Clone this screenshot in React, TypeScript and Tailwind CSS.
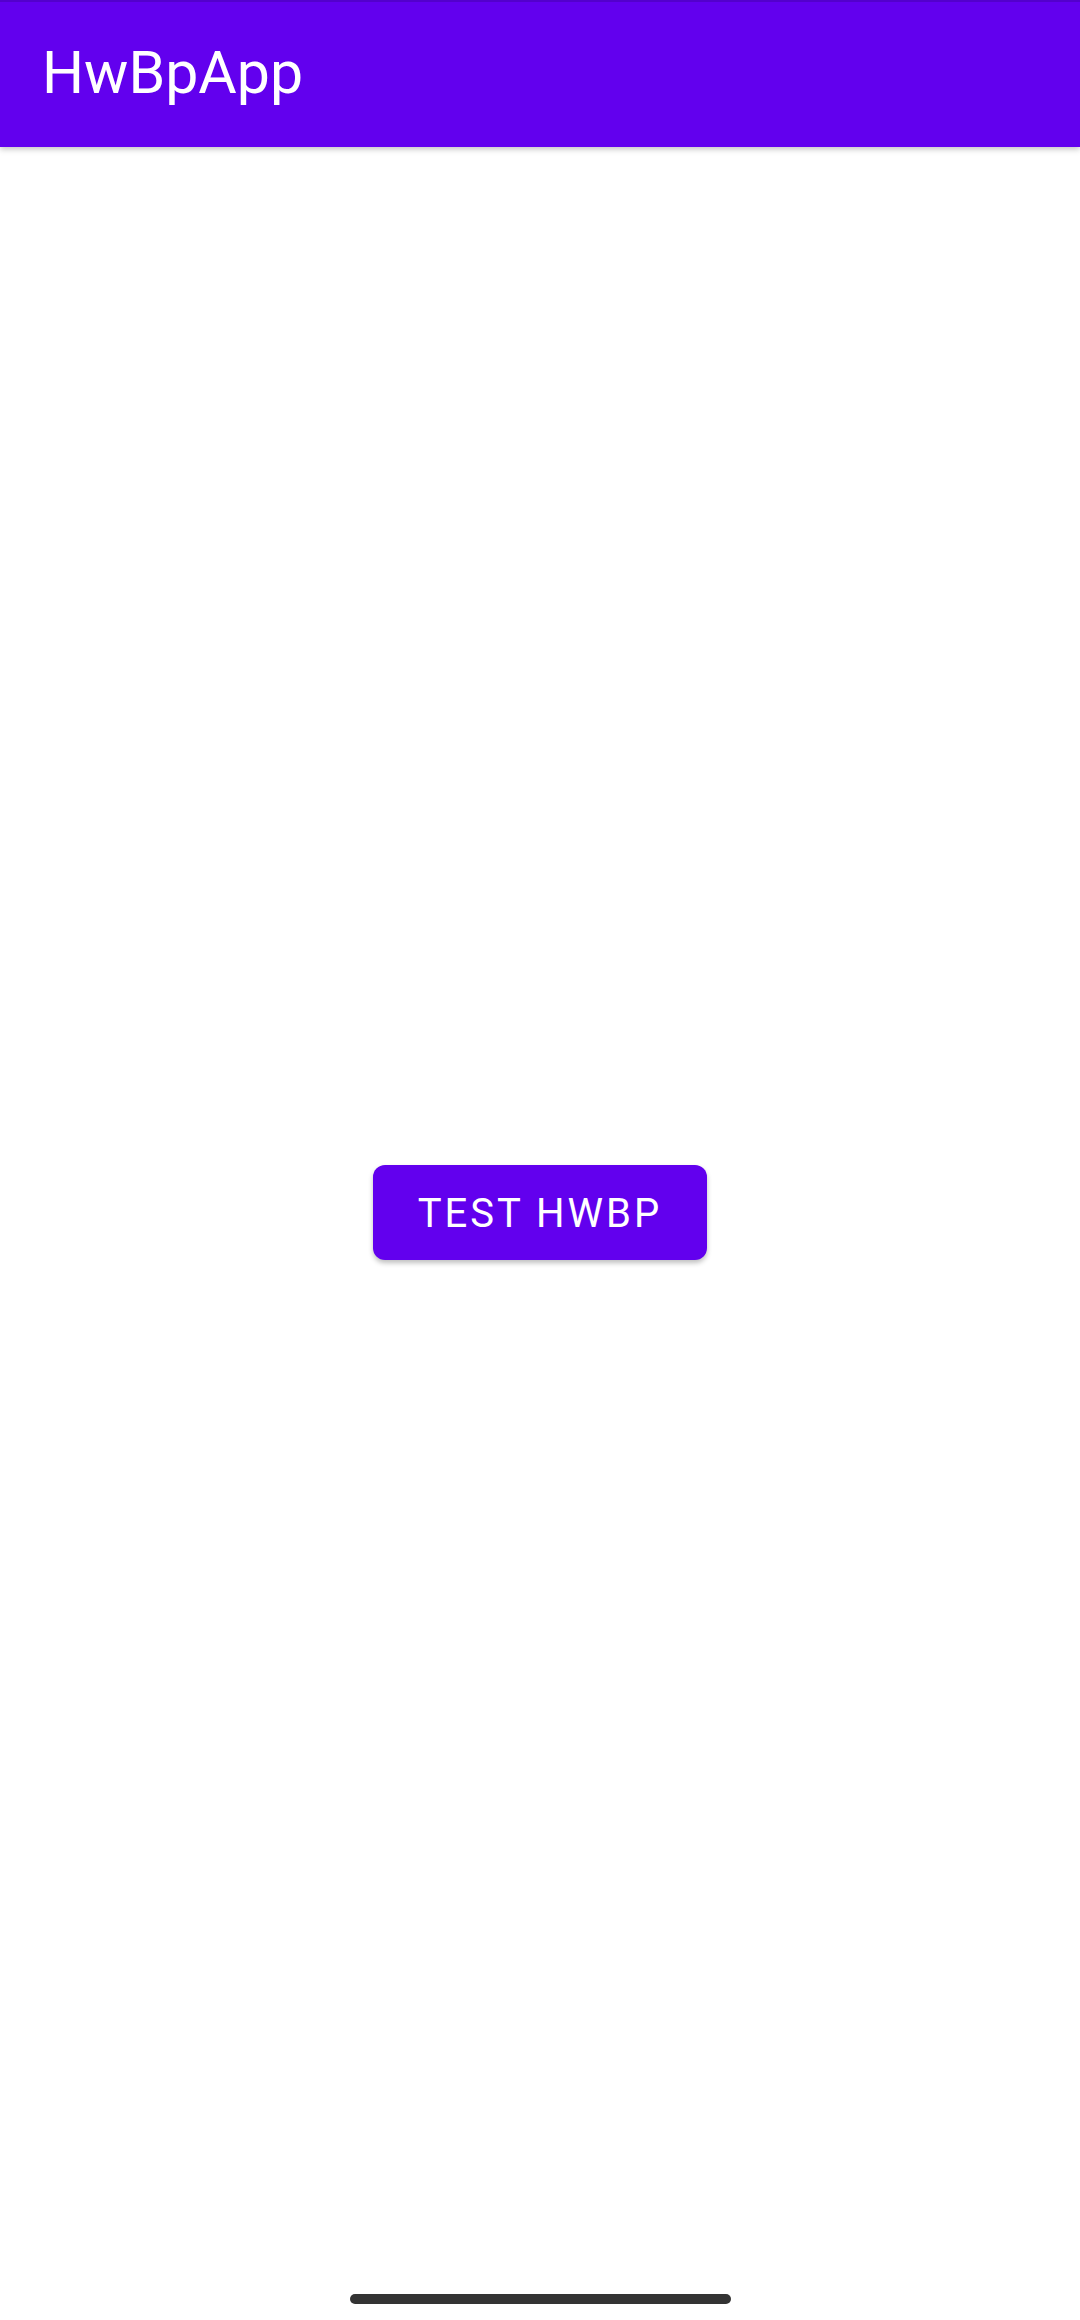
export default function App() {
  return (
    <div className="w-[1080px] h-[2320px] bg-white flex flex-col font-['Roboto',sans-serif] overflow-hidden">
      <header className="h-[147px] shrink-0 bg-[#6200ee] border-t-2 border-[#5300cc] flex items-center pl-[42px] shadow-[0_2px_6px_rgba(0,0,0,0.25)] relative z-10">
        <h1 className="text-[59px] text-white leading-none -mt-[4px]">HwBpApp</h1>
      </header>

      <main className="h-[2130px] shrink-0 flex items-center justify-center">
        <button className="w-[334px] h-[95px] rounded-[12px] bg-[#6200ee] text-white text-[40px] font-normal tracking-[3px] pt-[3px] shadow-[0_3px_5px_rgba(0,0,0,0.25)] flex items-center justify-center">
          TEST HWBP
        </button>
      </main>

      <footer className="flex-1 flex justify-center pt-[17px]">
        <div className="w-[381px] h-[10px] rounded-full bg-[#333333]" />
      </footer>
    </div>
  );
}
